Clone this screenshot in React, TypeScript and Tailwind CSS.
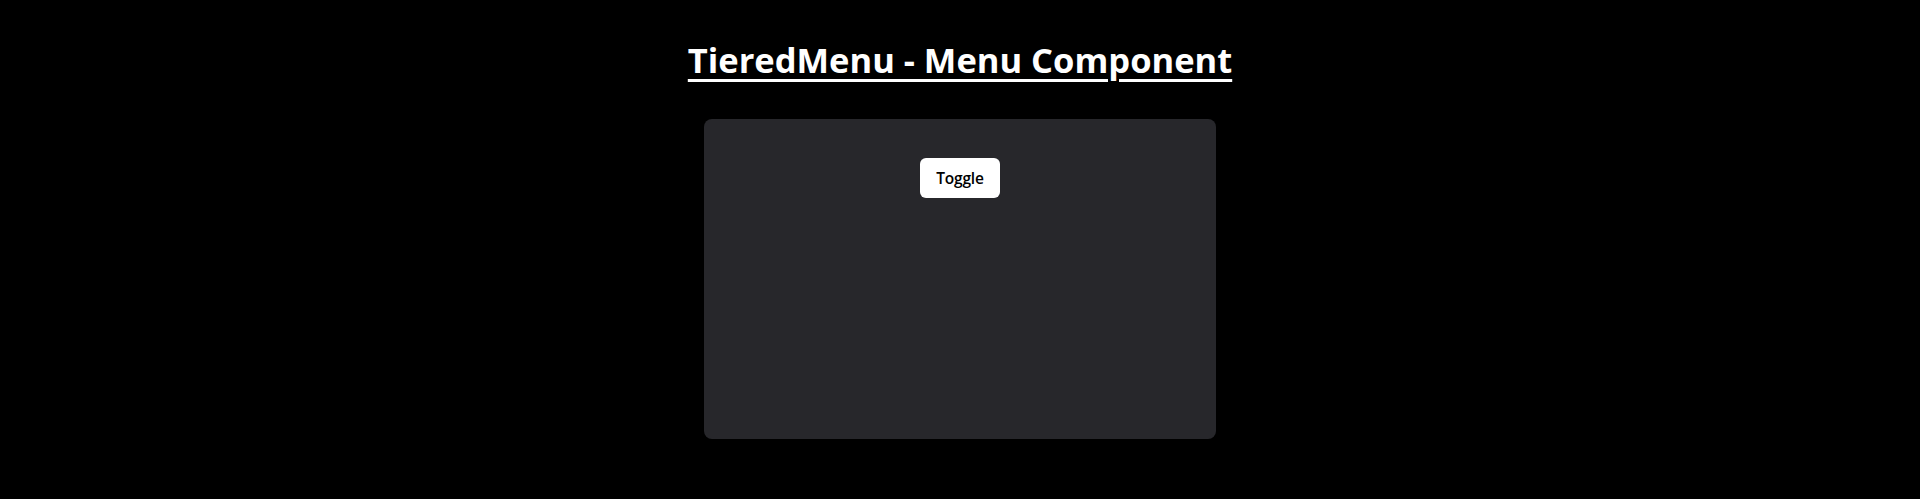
import React from "react";

export default function App() {
  return (
    <div className="min-h-[499px] w-full bg-black flex flex-col items-center pt-10 font-['Open_Sans',sans-serif]">
      <h1 className="text-[34.5px] leading-[40px] font-bold text-white underline decoration-[2.5px] underline-offset-[6px]">
        TieredMenu - Menu Component
      </h1>
      <div className="mt-[39px] w-[512px] h-[320px] rounded-lg bg-[#27272b] flex justify-center pt-[39px]">
        <div>
          <button className="h-10 w-20 rounded-md bg-white text-black text-[15.5px] font-semibold pt-[2px] tracking-[-0.2px]">
            Toggle
          </button>
        </div>
      </div>
    </div>
  );
}
